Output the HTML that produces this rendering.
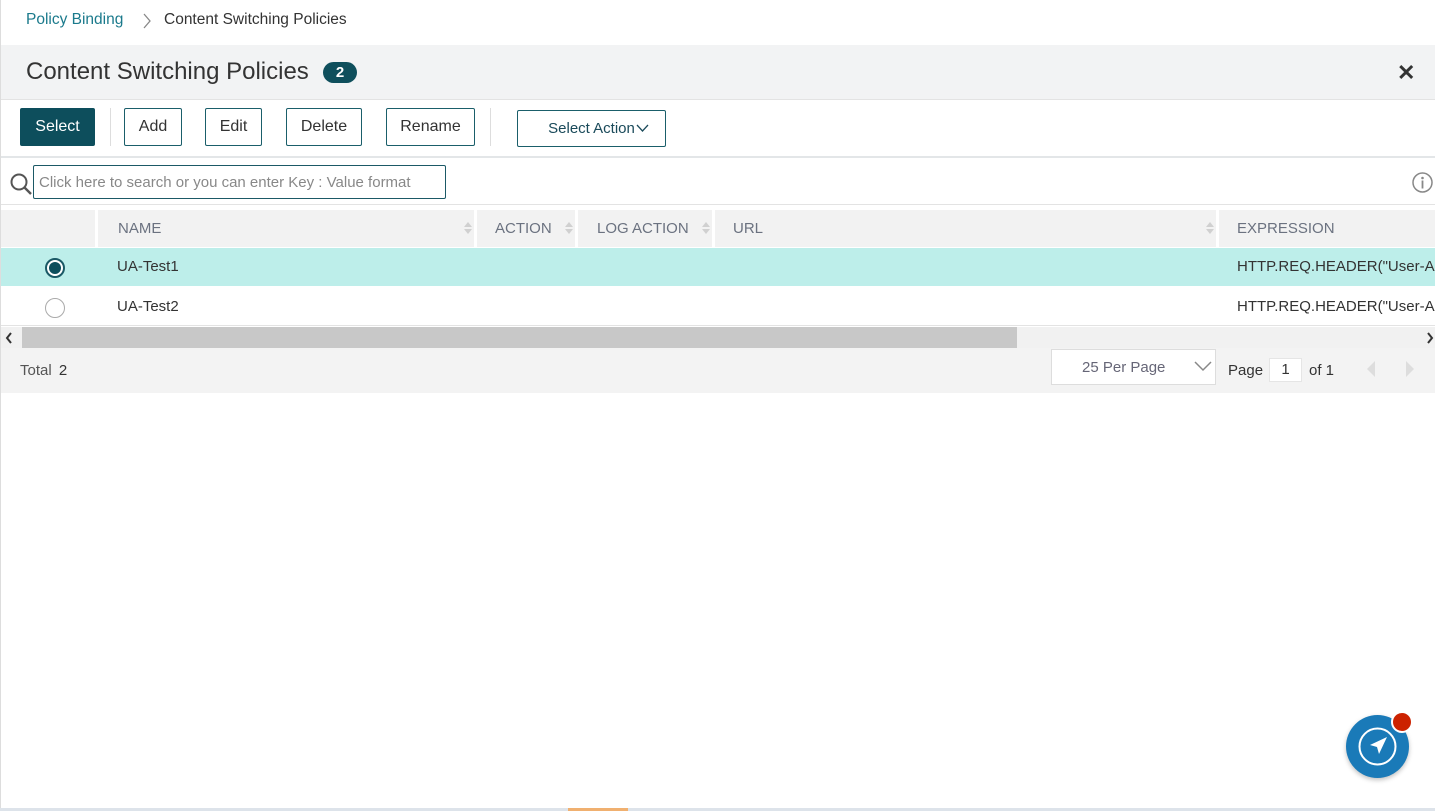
<!DOCTYPE html><html><head><style>
body{margin:0;width:1435px;height:811px;background:#fff;font-family:"Liberation Sans",sans-serif;position:relative;overflow:hidden;color:#333}
.a{position:absolute}
.btn{position:absolute;top:108px;height:38px;border:1px solid #1a5e6a;border-radius:2px;box-sizing:border-box;font-size:16px;display:flex;align-items:center;justify-content:center;color:#333;background:#fff}
.th{position:absolute;top:210px;height:37px;background:#f2f2f2;font-size:15px;color:#6b7280;line-height:37px;box-sizing:border-box;padding-left:20px;white-space:nowrap;overflow:hidden}
.sort{position:absolute;right:6px;top:12px;width:0;height:0}
.sort:before{content:"";position:absolute;left:-4px;top:0;border:4px solid transparent;border-bottom:5px solid #d0d0d0;border-top:0}
.sort:after{content:"";position:absolute;left:-4px;top:7px;border:4px solid transparent;border-top:5px solid #d0d0d0;border-bottom:0}
.td{position:absolute;font-size:15px;color:#333;white-space:nowrap;overflow:hidden}
</style></head><body>
<div class="a" style="left:0;top:0;width:1px;height:811px;background:#ddd"></div>
<div class="a" style="left:26px;top:11px;font-size:15.5px;color:#1b7a8c">Policy Binding</div>
<svg class="a" style="left:142px;top:13px" width="10" height="16"><path d="M2 1 L8 8 L2 15" fill="none" stroke="#888" stroke-width="1.3"/></svg>
<div class="a" style="left:164px;top:11px;font-size:15.5px;color:#333">Content Switching Policies</div>
<div class="a" style="left:1px;top:45px;width:1434px;height:54px;background:#f2f3f4;border-bottom:1px solid #e3e3e3"></div>
<div class="a" style="left:26px;top:58px;font-size:24px;color:#333">Content Switching Policies</div>
<div class="a" style="left:323px;top:62px;width:34px;height:21px;border-radius:11px;background:#0f4f5c;color:#fff;font-size:15px;font-weight:bold;text-align:center;line-height:21px">2</div>
<div class="a" style="left:1397px;top:60px;font-size:22px;color:#333;font-weight:bold">&#x2715;</div>
<div class="btn" style="left:20px;width:75px;background:#0d4e5c;color:#fff;border-color:#0d4e5c">Select</div>
<div class="a" style="left:110px;top:108px;width:1px;height:38px;background:#ddd"></div>
<div class="btn" style="left:124px;width:58px">Add</div>
<div class="btn" style="left:205px;width:57px">Edit</div>
<div class="btn" style="left:286px;width:76px">Delete</div>
<div class="btn" style="left:386px;width:89px">Rename</div>
<div class="a" style="left:490px;top:108px;width:1px;height:38px;background:#ddd"></div>
<div class="btn" style="left:517px;top:110px;height:37px;width:149px;font-size:15px;color:#1a4a5a;padding-left:14px">Select Action<svg width="13" height="9" style="margin-left:1px"><path d="M1 1 L6.5 7 L12 1" fill="none" stroke="#1a4a5a" stroke-width="1.3"/></svg></div>
<div class="a" style="left:1px;top:156px;width:1434px;height:2px;background:#e3e6e8"></div>
<svg class="a" style="left:9px;top:172px" width="24" height="24"><circle cx="10" cy="10" r="7.5" fill="none" stroke="#555" stroke-width="2"/><line x1="15.5" y1="15.5" x2="22" y2="22" stroke="#555" stroke-width="2.4"/></svg>
<div class="a" style="left:33px;top:165px;width:413px;height:34px;border:1px solid #1b5966;border-radius:2px;box-sizing:border-box;font-size:15px;color:#888;line-height:34px;padding-left:5px">Click here to search or you can enter Key : Value format</div>
<svg class="a" style="left:1411px;top:171px" width="24" height="24"><circle cx="11.5" cy="11.5" r="9.5" fill="none" stroke="#888" stroke-width="1.5"/><circle cx="11.5" cy="7" r="1.3" fill="#888"/><rect x="10.6" y="9.5" width="1.8" height="8" fill="#888"/></svg>
<div class="a" style="left:1px;top:204px;width:1434px;height:1px;background:#e3e3e3"></div>
<div class="th" style="left:1px;width:94px"></div>
<div class="th" style="left:98px;width:376px">NAME<span class="sort"></span></div>
<div class="th" style="left:477px;width:98px;padding-left:18px">ACTION<span class="sort"></span></div>
<div class="th" style="left:578px;width:134px;padding-left:19px">LOG ACTION<span class="sort"></span></div>
<div class="th" style="left:715px;width:501px;padding-left:18px">URL<span class="sort"></span></div>
<div class="th" style="left:1219px;width:216px;padding-left:18px">EXPRESSION</div>
<div class="a" style="left:1px;top:248px;width:1434px;height:38px;background:#bdeeea"></div>
<div class="a" style="left:45px;top:258px;width:20px;height:20px;border:2px solid #1b5966;border-radius:50%;background:#fff;box-sizing:border-box"><div style="position:absolute;left:2px;top:2px;width:12px;height:12px;border-radius:50%;background:#0d4e5c"></div></div>
<div class="td" style="left:117px;top:258px">UA-Test1</div>
<div class="td" style="left:1237px;top:258px;width:198px">HTTP.REQ.HEADER("User-Agent")</div>
<div class="a" style="left:45px;top:298px;width:20px;height:20px;border:1px solid #aaa;border-radius:50%;box-sizing:border-box"></div>
<div class="td" style="left:117px;top:298px">UA-Test2</div>
<div class="td" style="left:1237px;top:298px;width:198px">HTTP.REQ.HEADER("User-Agent")</div>
<div class="a" style="left:1px;top:325px;width:1434px;height:1px;background:#e3e3e3"></div>
<div class="a" style="left:1px;top:327px;width:1434px;height:21px;background:#f1f1f1"></div>
<div class="a" style="left:22px;top:327px;width:995px;height:21px;background:#c8c8c8"></div>
<svg class="a" style="left:5px;top:332px" width="8" height="12"><path d="M6 1 L2 6 L6 11" fill="none" stroke="#333" stroke-width="2"/></svg>
<svg class="a" style="left:1426px;top:332px" width="8" height="12"><path d="M2 1 L6 6 L2 11" fill="none" stroke="#333" stroke-width="2"/></svg>
<div class="a" style="left:1px;top:348px;width:1434px;height:45px;background:#f3f3f3"></div>
<div class="a" style="left:20px;top:362px;font-size:15px;color:#555">Total <span style="color:#333;margin-left:3px">2</span></div>
<div class="a" style="left:1051px;top:349px;width:165px;height:36px;background:#fff;border:1px solid #ddd;box-sizing:border-box;font-size:15px;color:#667;line-height:36px;padding-left:30px">25 Per Page</div>
<svg class="a" style="left:1194px;top:360px" width="18" height="12"><path d="M1 2 L9 10 L17 2" fill="none" stroke="#888" stroke-width="1.5"/></svg>
<div class="a" style="left:1228px;top:362px;font-size:15px;color:#333">Page</div>
<div class="a" style="left:1269px;top:358px;width:33px;height:24px;background:#fff;border:1px solid #e5e5e5;box-sizing:border-box;font-size:15px;text-align:center;line-height:22px">1</div>
<div class="a" style="left:1309px;top:362px;font-size:15px;color:#333">of 1</div>
<svg class="a" style="left:1366px;top:360px" width="50" height="18"><path d="M9 1 L1 9 L9 17Z" fill="#ddd"/><path d="M40 1 L48 9 L40 17Z" fill="#ddd"/></svg>
<div class="a" style="left:0;top:808px;width:1435px;height:3px;background:#dde3ea"></div>
<div class="a" style="left:568px;top:808px;width:60px;height:3px;background:#f0b070"></div>
<div class="a" style="left:1346px;top:715px;width:63px;height:63px;border-radius:50%;background:#1a7ab8;box-shadow:0 2px 5px rgba(0,0,0,.25)"></div>
<svg class="a" style="left:1346px;top:715px" width="63" height="63"><circle cx="31.5" cy="31.5" r="18" fill="none" stroke="#fff" stroke-width="2"/><path d="M41 22 L24 30 L31 32 L33 39Z" fill="#fff"/></svg>
<div class="a" style="left:1391px;top:711px;width:22px;height:22px;border-radius:50%;background:#cc2200;border:2px solid #fff;box-sizing:border-box"></div>
</body></html>
